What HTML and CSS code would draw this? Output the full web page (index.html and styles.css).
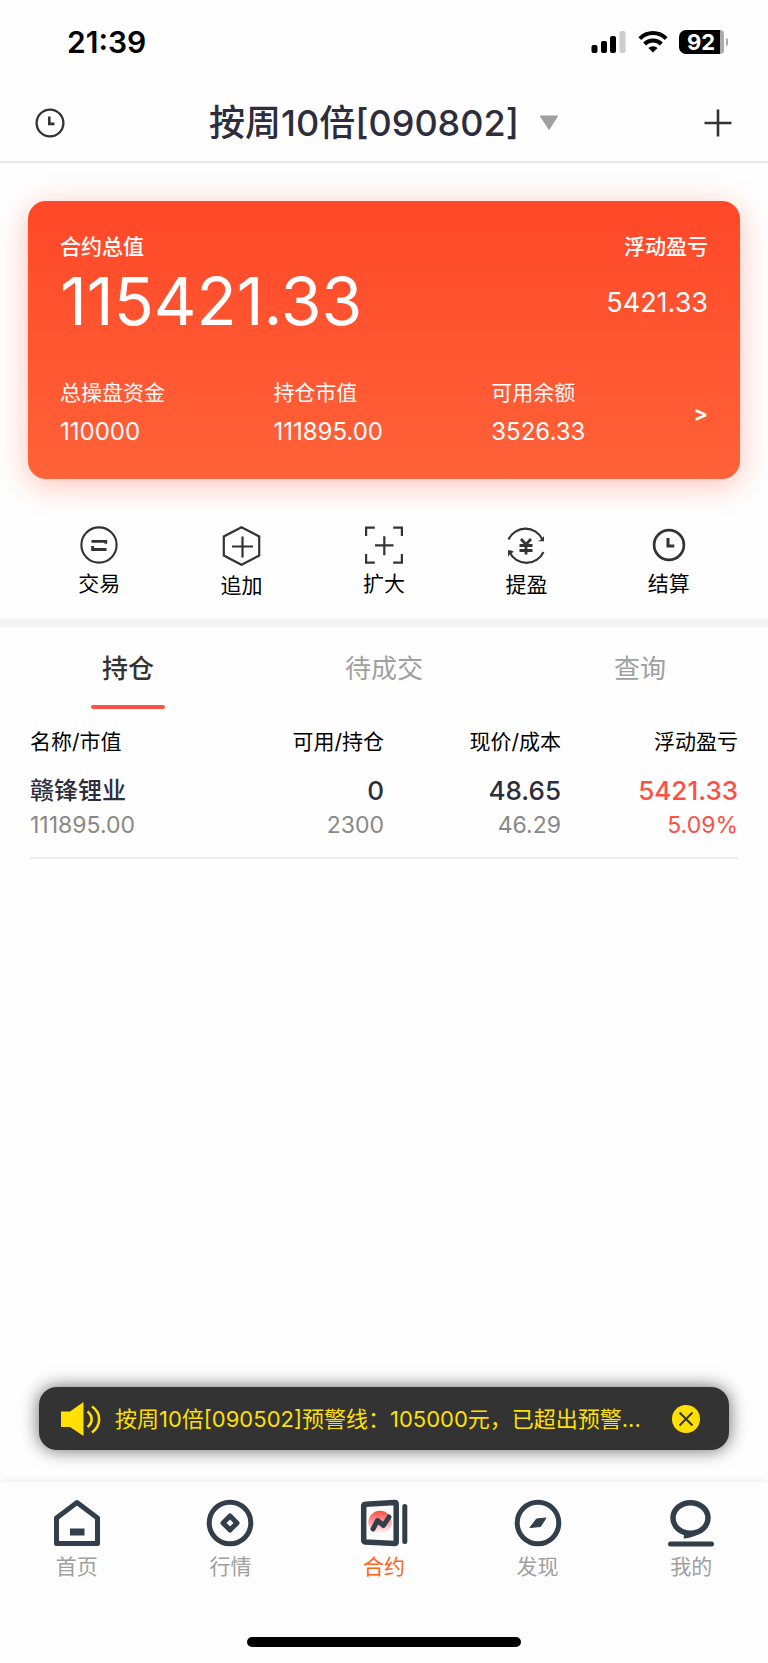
FILE: index.html
```html
<!DOCTYPE html>
<html lang="zh-CN">
<head>
<meta charset="utf-8">
<meta name="viewport" content="width=device-width, initial-scale=1">
<title>合约</title>
<link rel="stylesheet" href="styles.css">
</head>
<body>
<div class="status">
  <time class="status-time">21:39</time>
  <div class="status-icons">
    <svg width="36" height="24" viewBox="0 0 36 24" aria-hidden="true">
      <rect x="0.5" y="15" width="6" height="8" rx="2"/>
      <rect x="10" y="11" width="6" height="12" rx="2"/>
      <rect x="19" y="6" width="6" height="17" rx="2"/>
      <rect x="28.5" y="1" width="6" height="22" rx="2" fill="#ccc"/>
    </svg>
    <svg width="30" height="24" viewBox="0 0 30 24" fill="none" stroke="#000" stroke-width="4" aria-hidden="true">
      <path d="M1.8 8.6a18.6 18.6 0 0 1 26.4 0"/>
      <path d="M6.6 14a11.8 11.8 0 0 1 16.8 0"/>
      <path d="M15 22.6l-4.6-4.5a6.5 6.5 0 0 1 9.2 0z" fill="#000" stroke="none"/>
    </svg>
    <div class="battery"><span class="battery-level">92</span><span class="battery-rest"></span><span class="battery-cap"></span></div>
  </div>
</div>

<header class="header">
  <button class="icon-btn" aria-label="历史">
    <svg width="30" height="30" viewBox="0 0 30 30" fill="none" stroke="#333" aria-hidden="true"><circle cx="15" cy="15" r="13.4" stroke-width="2.3"/><path d="M14.3 8.500v7.400h5.200" stroke-width="2.600"/></svg>
  </button>
  <button class="title"><span>按周10倍[090802]</span>
    <svg width="20" height="16" viewBox="0 0 20 16" aria-hidden="true"><path d="M1.300 1h17.400L10 14.500z" fill="#a0a0a0" stroke="#a0a0a0" stroke-linejoin="round"/></svg>
  </button>
  <button class="icon-btn" aria-label="新增">
    <svg width="30" height="30" viewBox="0 0 30 30" fill="none" stroke="#333" stroke-width="2.600" aria-hidden="true"><path d="M1.500 15h27M15 1.500v27"/></svg>
  </button>
</header>

<main class="main">
  <section class="card">
    <div class="card-top">
      <div>
        <div class="label strong">合约总值</div>
        <div class="total">115421.33</div>
      </div>
      <div class="profit">
        <div class="label strong">浮动盈亏</div>
        <div class="profit-value">5421.33</div>
      </div>
    </div>
    <div class="card-bottom">
      <div><div class="label">总操盘资金</div><div class="value">110000</div></div>
      <div><div class="label">持仓市值</div><div class="value">111895.00</div></div>
      <div><div class="label">可用余额</div><div class="value">3526.33</div></div>
      <a class="more" href="#detail" aria-label="详情">&gt;</a>
    </div>
  </section>

  <nav class="actions">
    <button class="action">
      <svg width="38" height="38" viewBox="0 0 38 38" fill="none" stroke="#333" aria-hidden="true"><circle cx="19" cy="19" r="17.600" stroke-width="2.100"/><path d="M11.500 15.300h14.300v2.400M26.500 23.500H12.600v-3.400" stroke-width="2.800"/></svg>
      <span>交易</span>
    </button>
    <button class="action">
      <svg width="40" height="40" viewBox="0 0 40 40" fill="none" stroke="#333" stroke-width="2.200" aria-hidden="true"><path d="M19.500 1.200l17.700 9.300v19l-17.700 9.300-17.700-9.300v-19z"/><path d="M10 20.500h21M20.500 10.500v21"/></svg>
      <span>追加</span>
    </button>
    <button class="action">
      <svg width="38" height="38" viewBox="0 0 38 38" fill="none" stroke="#333" stroke-width="2.200" aria-hidden="true"><path d="M1.100 10V1.600h8.700M28.200 1.600h8.700V10M36.900 28v8.600h-8.700M9.800 36.600H1.100V28M10 19.300h18.500M19.300 10.200v19"/></svg>
      <span>扩大</span>
    </button>
    <button class="action">
      <svg width="38" height="39" viewBox="0 0 38 39" fill="none" stroke="#333" stroke-width="2.100" aria-hidden="true"><path d="M1.500 13.500a18.700 18.700 0 0 1 34 0"/><path d="M37 10v5.300h-6l3.500-2z" fill="#333" stroke="none"/><path d="M36.500 26a18.700 18.700 0 0 1-34 0"/><path d="M1 31v-6.500c2-.6 4 0 6 1.500l-3.800 1.500z" fill="#333" stroke="none"/><path d="M14 13l5 5.500 5-5.500M12.500 19.500h13M12.500 24.500h13M19 18.500v10" stroke-width="2.800"/></svg>
      <span>提盈</span>
    </button>
    <button class="action">
      <svg width="38" height="38" viewBox="0 0 38 38" fill="none" stroke="#333" aria-hidden="true"><circle cx="19" cy="19" r="14.900" stroke-width="2.700"/><path d="M18 12v8h6.300" stroke-width="3"/></svg>
      <span>结算</span>
    </button>
  </nav>

  <div class="tabs" role="tablist">
    <button class="tab active" role="tab" aria-selected="true">持仓</button>
    <button class="tab" role="tab" aria-selected="false">待成交</button>
    <button class="tab" role="tab" aria-selected="false">查询</button>
  </div>

  <div class="holdings-wrap">
    <table class="holdings">
      <thead>
        <tr><th>名称/市值</th><th>可用/持仓</th><th>现价/成本</th><th>浮动盈亏</th></tr>
      </thead>
      <tbody>
        <tr>
          <td><div class="primary">赣锋锂业</div><div class="secondary">111895.00</div></td>
          <td><div class="primary">0</div><div class="secondary">2300</div></td>
          <td><div class="primary">48.65</div><div class="secondary">46.29</div></td>
          <td class="up"><div class="primary">5421.33</div><div class="secondary">5.09%</div></td>
        </tr>
      </tbody>
    </table>
  </div>

  <div class="toast" role="alert">
    <svg class="speaker" width="40" height="36" viewBox="0 0 40 36" fill="none" stroke="#ffe000" stroke-width="2.600" aria-hidden="true"><path d="M0 10.500h9L22.500 1v34L9 26H0z" fill="#ffe000" stroke="none"/><path d="M26.500 10.500c5.500 4.500 5.500 11 0 15.500M31 5.500c9.500 6.500 9.500 19 0 26"/></svg>
    <p class="toast-text">按周10倍[090502]预警线：105000元，已超出预警...</p>
    <button class="close" aria-label="关闭">
      <svg width="28" height="28" viewBox="0 0 28 28" fill="none" stroke="#333" stroke-width="2" aria-hidden="true"><circle cx="14" cy="14" r="14" fill="#ffe000" stroke="none"/><path d="M7.500 7.500l13 13M20.500 7.500l-13 13"/></svg>
    </button>
  </div>
</main>

<nav class="tabbar">
  <a class="nav-item" href="#home">
    <svg width="48" height="48" viewBox="0 0 48 48" fill="none" stroke="#323f4b" stroke-width="5" stroke-linejoin="round" aria-hidden="true"><path d="M3.500 19L24 3.500 44.500 19v25.500h-41z"/><path d="M17 33h14.500" stroke-width="7"/></svg>
    <span>首页</span>
  </a>
  <a class="nav-item" href="#market">
    <svg width="48" height="48" viewBox="0 0 48 48" fill="none" stroke="#323f4b" stroke-width="5" stroke-linejoin="round" aria-hidden="true"><circle cx="24" cy="24" r="20.800"/><path d="M24 17l7 7-7 7-7-7z"/></svg>
    <span>行情</span>
  </a>
  <a class="nav-item current" href="#contract" aria-current="page">
    <svg width="48" height="48" viewBox="0 0 48 48" fill="none" stroke="#323f4b" stroke-width="5" stroke-linejoin="round" stroke-linecap="round" aria-hidden="true">
      <defs><linearGradient id="glow" x1="0" y1="0" x2="0" y2="1"><stop offset="0" stop-color="#ff4a45"/><stop offset="1" stop-color="#ff4a45" stop-opacity="0"/></linearGradient></defs>
      <circle cx="20" cy="23.500" r="11.700" fill="url(#glow)" stroke="none"/>
      <path d="M5.500 5.200L34.500 3.600q1.700 0 1.700 1.700v37.400q0 1.700-1.700 1.700l-29-1.400q-1.800 0-1.800-1.700V7q0-1.700 1.800-1.800z" stroke-width="5.500"/><path d="M44.800 7.500v35"/><path d="M13 30l4.500-8.500 6 5 5.500-8.500"/></svg>
    <span>合约</span>
  </a>
  <a class="nav-item" href="#discover">
    <svg width="48" height="48" viewBox="0 0 48 48" fill="none" stroke="#323f4b" stroke-width="5" aria-hidden="true"><circle cx="24" cy="24" r="20.800"/><path d="M22.500 20l9.500-1-5.500 8.500-10.500 1z" fill="#323f4b" stroke-width="1"/></svg>
    <span>发现</span>
  </a>
  <a class="nav-item" href="#mine">
    <svg width="48" height="48" viewBox="0 0 48 48" fill="none" stroke="#323f4b" stroke-width="5" stroke-linecap="round" aria-hidden="true"><ellipse cx="23.500" cy="19" rx="17.500" ry="15.300" stroke-width="5.500"/><path d="M17.500 34l-1 5.500c8-.5 14-3 18-8z" fill="#323f4b" stroke="none"/><path d="M3.500 45h41"/></svg>
    <span>我的</span>
  </a>
</nav>
<div class="home-area"><div class="home-indicator"></div></div>
</body>
</html>
```
FILE: styles.css
```css
* {
  box-sizing: border-box;
}

body {
  margin: 0;
  min-height: 100vh;
  display: flex;
  flex-direction: column;
  background: #fefefe;
  color: #000;
  font-family: Inter, "Noto Sans CJK SC", sans-serif;
  font-size: 21px;
  line-height: 32px;
}

button {
  padding: 0;
  border: 0;
  background: none;
  color: inherit;
  font: inherit;
}

a {
  color: inherit;
  text-decoration: none;
}

svg {
  display: block;
  flex: none;
}

/* Status bar */
.status {
  display: flex;
  align-items: center;
  justify-content: space-between;
  height: 84px;
  padding: 0 40px 0 67px;
}

.status-time {
  font-size: 30px;
  font-weight: 600;
}

.status-icons {
  display: flex;
  align-items: center;
  gap: 11px;
}

.battery {
  display: flex;
  align-items: center;
  height: 24px;
  font-size: 22px;
  font-weight: 700;
  line-height: 24px;
  color: #fff;
}

.battery-level {
  padding-left: 8px;
  width: 41px;
  border-radius: 7px 0 0 7px;
  background: #000;
}

.battery-rest {
  width: 4px;
  height: 24px;
  border-radius: 0 4px 4px 0;
  background: #aaa;
}

.battery-cap {
  width: 2px;
  height: 8px;
  margin-left: 2px;
  border-radius: 0 2px 2px 0;
  background: #aaa;
}

/* Page header */
.header {
  display: flex;
  align-items: center;
  justify-content: space-between;
  height: 79px;
  padding: 0 35px;
  border-bottom: 2px solid #e9e9e9;
}

.title {
  display: flex;
  align-items: center;
  gap: 20px;
  color: #2d2d3d;
  font-size: 36px;
  font-weight: 500;
  line-height: 48px;
}

/* Content */
.main {
  flex: 1;
  display: flex;
  flex-direction: column;
}

.card {
  margin: 38px 28px 0;
  padding: 30px 32px 28px;
  border-radius: 18px;
  background: linear-gradient(#ff4829, #ff6238);
  box-shadow: 0 6px 30px rgba(255, 80, 50, 0.35);
  color: #fff;
}

.card-top,
.card-bottom {
  display: flex;
  justify-content: space-between;
}

.strong {
  font-weight: 500;
}

.total {
  font-size: 66px;
  line-height: 76px;
}

.profit {
  text-align: right;
}

.profit-value {
  margin-top: 20px;
  font-size: 27px;
  line-height: 40px;
}

.card-bottom {
  margin-top: 38px;
}

.value {
  margin-top: 4px;
  font-size: 24px;
  line-height: 38px;
}

.more {
  align-self: center;
  font-weight: 700;
}

.actions {
  display: grid;
  grid-template-columns: repeat(5, 1fr);
  align-items: start;
  margin-top: 47px;
  padding: 0 28px 16px;
  border-bottom: 9px solid #f3f3f3;
}

.action {
  display: flex;
  flex-direction: column;
  align-items: center;
  gap: 4px;
}

.tabs {
  display: grid;
  grid-template-columns: repeat(3, 1fr);
}

.tab {
  display: flex;
  flex-direction: column;
  align-items: center;
  padding-top: 22px;
  color: #a0a0a0;
  font-size: 26px;
  line-height: 40px;
}

.tab::after {
  content: "";
  width: 74px;
  height: 4px;
  margin-top: 16px;
  border-radius: 2px;
}

.active {
  color: #333;
  font-weight: 500;
}

.active::after {
  background: #ff5244;
}

.holdings-wrap {
  padding: 0 30px;
}

.holdings {
  width: 100%;
  border-collapse: collapse;
  table-layout: fixed;
}

.holdings th,
.holdings td {
  padding: 0;
  text-align: right;
}

.holdings th:first-child,
.holdings td:first-child {
  text-align: left;
}

.holdings th {
  height: 66px;
  font-weight: 400;
}

.holdings td {
  padding-bottom: 14px;
  border-bottom: 2px solid #eee;
}

.primary {
  color: #2d2d3d;
  font-size: 26px;
  font-weight: 500;
  line-height: 32px;
}

td:first-child .primary {
  font-size: 24px;
}

.secondary {
  color: #888;
  font-size: 23px;
  line-height: 36px;
}

.up .primary,
.up .secondary {
  color: #ff4f44;
}

/* Warning toast */
.toast {
  display: flex;
  align-items: center;
  gap: 14px;
  height: 63px;
  margin: auto 39px 32px;
  padding: 0 29px 0 22px;
  border-radius: 18px;
  background: #333;
  box-shadow: 0 0 18px rgba(0, 0, 0, 0.6);
  color: #ffe000;
}

.toast-text {
  flex: 1;
  margin: 0;
  font-size: 22px;
}

/* Bottom navigation */
.tabbar {
  display: grid;
  grid-template-columns: repeat(5, 1fr);
  height: 117px;
  padding-top: 17px;
  border-radius: 4px;
  background: #fdfdfd;
  box-shadow: 0 0 10px rgba(0, 0, 0, 0.1);
}

.nav-item {
  display: flex;
  flex-direction: column;
  align-items: center;
  gap: 4px;
  color: #a0a0a0;
}

.current {
  color: #ff6418;
}

.home-area {
  position: relative;
  display: flex;
  justify-content: center;
  align-items: flex-end;
  height: 64px;
  padding-bottom: 16px;
  background: #fefefe;
}

.home-indicator {
  width: 274px;
  height: 10px;
  border-radius: 5px;
  background: #000;
}
```
